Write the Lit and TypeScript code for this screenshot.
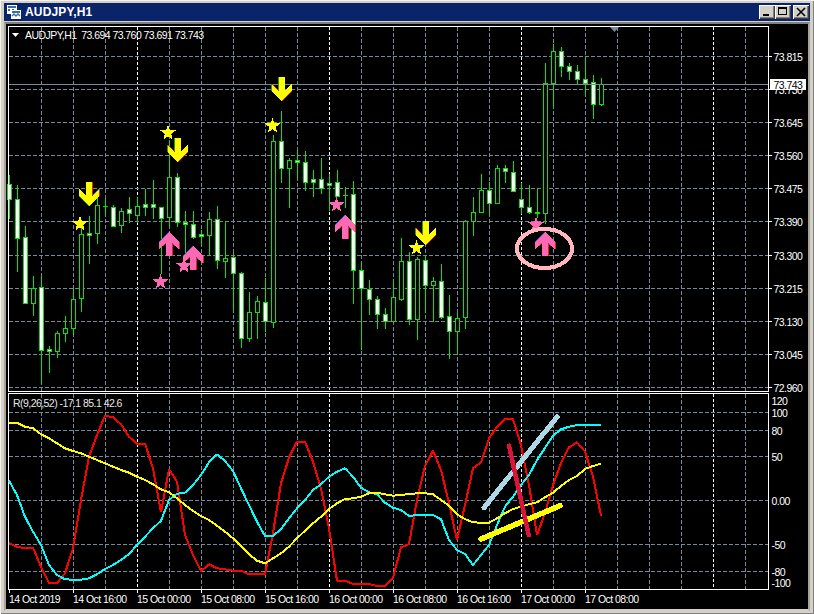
import { LitElement, html, css, svg } from "lit";
import { customElement } from "lit/decorators.js";

// [wick top, body top, body bottom, wick bottom, bearish(white)]
type Bar = [number, number, number, number, number];
const BARS: Bar[] = [
  [175,184,199,218,1],[185,199,238,271,1],[226,237,303,303,1],[276,288,303,315,0],[276,287,350,383,1],
  [346,349,351,372,1],[331,333,351,357,0],[316,328,333,341,0],[289,299,328,334,0],[222,234,298,311,0],
  [216,233,235,263,1],[195,205,233,243,0],[199,206,206,215,0],[205,207,226,226,1],[208,211,225,232,0],
  [197,209,213,222,1],[197,206,215,222,0],[189,204,207,215,1],[180,204,207,218,1],[207,207,218,273,1],
  [140,177,217,227,0],[173,177,222,226,1],[211,222,224,253,1],[211,224,237,238,1],[230,234,236,245,1],
  [212,219,235,255,0],[206,219,260,268,1],[222,258,261,277,0],[253,257,273,310,1],[272,273,338,347,1],
  [292,312,338,341,0],[296,301,312,338,0],[278,302,321,331,1],[135,141,322,327,0],[111,141,168,182,1],
  [158,160,168,207,0],[151,160,162,178,1],[151,162,182,190,1],[170,179,182,196,1],[158,179,188,193,1],
  [174,183,185,210,1],[170,182,196,196,1],[187,195,195,207,0],[181,194,270,303,1],[262,270,288,349,1],
  [280,289,299,314,1],[296,299,314,328,1],[308,314,321,328,1],[280,297,321,321,0],[238,261,299,300,0],
  [252,261,319,324,1],[257,259,319,339,0],[255,260,285,312,1],[277,281,285,321,0],[264,281,317,318,1],
  [295,316,331,358,1],[313,318,331,353,0],[220,221,317,328,0],[197,212,221,235,0],[174,190,212,212,0],
  [182,190,203,215,1],[165,168,203,203,0],[165,168,171,182,1],[161,172,191,191,1],[183,199,207,213,1],
  [185,207,212,213,1],[188,212,213,217,1],[63,83,213,223,0],[44,51,83,107,0],[47,51,66,76,1],
  [63,66,71,79,1],[65,71,79,84,1],[57,79,83,95,1],[75,82,104,118,1],[78,84,104,105,0],
];

const RED = [543.3,546.7,548.3,547.7,566.7,583,583,573.3,548.3,500,456.7,435,415.7,417.3,424.3,436.7,443.7,443.7,468.3,512.3,469,481.7,535,555,571,564.3,568.3,569.3,570.7,570.7,574.3,574.3,574.3,533,483.3,457.7,441.7,441.7,461.7,488.3,528.3,580.7,580.7,584,584,584,586,586,577.7,547.3,544,500,466,450.7,470,503.3,540,505,468.3,462.3,438.3,426.7,419,419,445,485,535,513,485,463,447.3,442.3,451.7,476.7,515.7];
const YELLOW = [422.7,422.7,426.7,428.3,434.3,438.3,443.3,448.3,451,453.3,456.7,460,463.3,466.7,470,472.7,476.7,480,484.3,489.3,492.3,498.3,505,511,516,520,525.7,531.7,538.3,546,554.3,560.7,563.3,558.3,553.3,546.7,538.3,530.7,523.3,516.7,509,503.3,499,498.3,496.7,493.3,492.7,494.3,495.7,495,494,493.3,493.3,494.3,500,505.7,514.3,519,522.3,522.7,522.7,518.3,513.3,509,506.7,504.3,502.3,497.3,492.7,486,480,476,469,466,463.7];
const CYAN = [480.7,495,516.7,531.7,545,565,575,579.3,579.7,579.7,578.3,574.3,569,565,560,554,545,536.7,528.3,520.7,500,493.7,492.7,485,475,462.3,454.3,461,471,488.3,505,521.7,536,536,529,518.3,508.3,500,490,484.3,476.7,471.7,468.3,476.7,487.7,492.3,494.3,502.7,507.7,510,516,515,515,515,519.3,540,550,554,565,555,545,525,506.7,496.7,485,475,460,448,435.7,429.3,426.7,425,425,425,425];

const X = (k: number) => 9 + 8 * k;
const pts = (ys: number[]) => ys.map((y, k) => `${X(k)},${y}`).join(" ");

const V_GRID = Array.from({ length: 23 }, (_, i) => 41 + 32 * i);
const DAY_LINES = new Set([137, 329, 521, 713]);
const MAIN_H = [56, 89, 122, 155, 188, 221, 255, 288, 321, 354, 387];
const PRICES: [string, number][] = [["73.815",56],["73.730",89],["73.645",122],["73.560",155],["73.475",188],["73.390",221],["73.300",255],["73.215",288],["73.130",321],["73.045",354],["72.960",387]];
const SUB_H = [412, 430, 456, 500, 544, 571];
const LEVELS: [string, number][] = [["120",400],["100",412],["80",430],["50",456],["0.00",500],["-50",544],["-80",571],["-100",582]];
const TIMES: [string, number][] = [["14 Oct 2019",9],["14 Oct 16:00",73],["15 Oct 00:00",137],["15 Oct 08:00",201],["15 Oct 16:00",265],["16 Oct 00:00",329],["16 Oct 08:00",393],["16 Oct 16:00",457],["17 Oct 00:00",521],["17 Oct 08:00",585]];

const star = (cx: number, cy: number, cls: string) => {
  const p: string[] = [];
  for (let i = 0; i < 10; i++) {
    const r = i % 2 ? 3.3 : 8;
    const a = -Math.PI / 2 + (i * Math.PI) / 5;
    p.push(`${(cx + r * Math.cos(a)).toFixed(1)},${(cy + r * Math.sin(a)).toFixed(1)}`);
  }
  return svg`<polygon class=${cls} points=${p.join(" ")}></polygon>`;
};

const DOWN = "-3,0 3,0 3,14 10,7 10,14 0,24 -10,14 -10,7 -3,14";
const UP = "0,0 10,10 10,17 3,11 3,24 -3,24 -3,11 -10,17 -10,10";
const arrow = (cx: number, y: number, shape: string, cls: string, left: string, right: string) => svg`
  <g transform="translate(${cx} ${y})">
    <polygon class=${left} points=${shape} transform="translate(-0.5 0)"></polygon>
    <polygon class=${right} points=${shape} transform="translate(0.5 0)"></polygon>
    <polygon class=${cls} points=${shape}></polygon>
  </g>`;

@customElement("app-root")
export class AppRoot extends LitElement {
  static styles = css`
    :host { display: block; width: 814px; height: 614px; }
    .window {
      box-sizing: border-box; width: 814px; height: 614px;
      display: flex; flex-direction: column; padding: 3px 4px 3px 4px;
      background: #d4d0c8; box-shadow: inset 1px 1px 0 #f4f2ee, inset -1px -1px 0 #808080;
    }
    .titlebar {
      flex: 0 0 18px; display: flex; align-items: center; gap: 4px; padding-left: 3px; margin: 0 0 1px 0;
      background: #0a246a; color: #fff;
      font: bold 12px "Liberation Sans", Arial, sans-serif; letter-spacing: 0.15px;
    }
    .title { flex: 1; }
    .app-icon { width: 14px; height: 14px; display: block; }
    .buttons { display: flex; margin-right: 1px; }
    .btn {
      width: 16px; height: 14px; box-sizing: border-box; background: #d4d0c8; display: block;
      box-shadow: inset 1px 1px 0 #fff, inset -1px -1px 0 #404040, inset -2px -2px 0 #808080;
    }
    .btn.close { margin-left: 2px; }
    .client {
      flex: 1; min-height: 0; border: 2px solid; border-color: #808080 #a8a49c #d4d0c8 #a8a49c;
      background: #000; overflow: hidden;
    }
    .chart { display: block; width: 802px; height: 585px; }
    text { font-family: "Liberation Sans", Arial, sans-serif; font-size: 10.5px; letter-spacing: -0.55px; fill: #fff; dominant-baseline: central; white-space: pre; }
    .caption { fill: #e8e8e8; }
    .on-white { fill: #000; }
    .frame { stroke: #fff; fill: none; shape-rendering: crispEdges; }
    .tick { stroke: #fff; shape-rendering: crispEdges; }
    .grid { stroke: #778899; stroke-dasharray: 4 2; shape-rendering: crispEdges; }
    .day { stroke: #fff; stroke-dasharray: 3 2; shape-rendering: crispEdges; }
    .level { stroke: #778899; shape-rendering: crispEdges; }
    .wick { stroke: #00e800; shape-rendering: crispEdges; }
    .outline { fill: #00e800; shape-rendering: crispEdges; }
    .bear { fill: #fff; shape-rendering: crispEdges; }
    .bull { fill: #000; shape-rendering: crispEdges; }
    .red, .yellow, .cyan { fill: none; stroke-width: 2; stroke-linejoin: bevel; shape-rendering: crispEdges; }
    .red { stroke: #ff0000; }
    .yellow { stroke: #ffff00; }
    .cyan { stroke: #00ffff; }
    .s-yellow { fill: #ffff00; shape-rendering: crispEdges; }
    .s-pink { fill: #ff69b4; shape-rendering: crispEdges; }
    .f-green { fill: #20a020; shape-rendering: crispEdges; }
    .f-red { fill: #e02020; shape-rendering: crispEdges; }
    .f-blue { fill: #4848c8; shape-rendering: crispEdges; }
    .marker { fill: #778899; }
    .menu { fill: #fff; }
    .label-bg { fill: #fff; shape-rendering: crispEdges; }
    .ring { fill: none; stroke: #ffb6c1; stroke-width: 4; shape-rendering: crispEdges; }
    .draw { fill: none; stroke-linecap: round; shape-rendering: crispEdges; }
    .d-blue { stroke: #add8e6; stroke-width: 5; }
    .d-yellow { stroke: #ffff00; stroke-width: 5.5; }
    .d-red { stroke: #dc143c; stroke-width: 4.5; }
  `;

  private candle(b: Bar, k: number) {
    const x = X(k);
    const [hi, top, bot, lo, bear] = b;
    const h = Math.max(bot - top, 0) + 1;
    return svg`
      <line class="wick" x1=${x + 0.5} x2=${x + 0.5} y1=${hi} y2=${lo + 1}></line>
      <rect class="outline" x=${x - 2} y=${top} width="5" height=${h}></rect>
      ${h > 2 ? svg`<rect class=${bear ? "bear" : "bull"} x=${x - 1} y=${top + 1} width="3" height=${h - 2}></rect>` : null}`;
  }

  render() {
    return html`
      <div class="window">
        <div class="titlebar">
          <svg class="app-icon" viewBox="0 0 14 14">
            <rect x="0" y="0" width="10" height="9" fill="#fff"></rect>
            <rect x="1" y="1" width="8" height="2" fill="#3a6ea5"></rect>
            <rect x="1" y="4" width="2" height="2" fill="#3a6ea5"></rect>
            <rect x="5" y="4" width="2" height="2" fill="#3a6ea5"></rect>
            <rect x="4" y="5" width="10" height="9" fill="#fff"></rect>
            <rect x="5" y="6" width="8" height="2" fill="#3a6ea5"></rect>
            <path d="M5 11l2-2 2 2 2-2 2 2" fill="none" stroke="#3a6ea5" stroke-width="1.4"></path>
          </svg>
          <span class="title">AUDJPY,H1</span>
          <div class="buttons">
            <svg class="btn" viewBox="0 0 16 14"><rect x="4" y="9" width="6" height="2" fill="#000"></rect></svg>
            <svg class="btn" viewBox="0 0 16 14"><path d="M3 2h9v8H3z M4 4v5h7V4z" fill="#000" fill-rule="evenodd"></path></svg>
            <svg class="btn close" viewBox="0 0 16 14"><path d="M4 3l8 8M12 3l-8 8" stroke="#000" stroke-width="1.6" fill="none"></path></svg>
          </div>
        </div>
        <div class="client">
          <svg class="chart" viewBox="6 24 802 585">
            ${V_GRID.map((x) => svg`
              <line class=${DAY_LINES.has(x) ? "day" : "grid"} x1=${x + 0.5} x2=${x + 0.5} y1="27" y2="391"></line>
              <line class=${DAY_LINES.has(x) ? "day" : "grid"} x1=${x + 0.5} x2=${x + 0.5} y1="394" y2="589"></line>`)}
            ${MAIN_H.map((y) => svg`<line class="grid" x1="9" x2="768" y1=${y + 0.5} y2=${y + 0.5}></line>`)}
            ${SUB_H.map((y) => svg`<line class="grid" x1="9" x2="768" y1=${y + 0.5} y2=${y + 0.5}></line>`)}

            ${BARS.map((b, k) => this.candle(b, k))}
            <line class="level" x1="9" x2="768" y1="84.5" y2="84.5"></line>

            ${star(168, 133, "s-yellow")}${star(80, 224, "s-yellow")}${star(272.5, 126, "s-yellow")}${star(416.5, 248, "s-yellow")}
            ${star(160.5, 282, "s-pink")}${star(184, 266, "s-pink")}${star(336.5, 205, "s-pink")}${star(536, 225, "s-pink")}
            ${[[89, 182], [177.5, 138], [281.5, 77], [425.5, 221]].map(([x, y]) => arrow(x, y, DOWN, "s-yellow", "f-green", "f-red"))}
            ${[[169, 232], [193, 246], [345, 215], [545, 232]].map(([x, y]) => arrow(x, y, UP, "s-pink", "f-blue", "f-red"))}
            <ellipse class="ring" cx="544.5" cy="248.5" rx="27.5" ry="19.5"></ellipse>

            <rect class="frame" x="8.5" y="26.5" width="760" height="365"></rect>
            <rect class="frame" x="8.5" y="393.5" width="760" height="196"></rect>

            <polygon class="menu" points="12,33 19,33 15.5,37"></polygon>
            <text x="25" y="35">AUDJPY,H1  73.694 73.760 73.691 73.743</text>
            <polygon class="marker" points="610,27 619,27 614.5,32"></polygon>

            ${PRICES.map(([t, y]) => svg`
              <line class="tick" x1="769" x2="772" y1=${y + 0.5} y2=${y + 0.5}></line>
              <text x="773.5" y=${y + 1}>${t}</text>`)}
            <rect class="label-bg" x="770" y="79" width="36" height="11"></rect>
            <text class="on-white" x="773.5" y="85">73.743</text>

            <polyline class="red" points=${pts(RED)}></polyline>
            <polyline class="cyan" points=${pts(CYAN)}></polyline>
            <polyline class="yellow" points=${pts(YELLOW)}></polyline>
            <line class="draw d-blue" x1="484" y1="507.7" x2="557" y2="417"></line>
            <line class="draw d-yellow" x1="481" y1="539" x2="560" y2="505.7"></line>
            <line class="draw d-red" x1="509" y1="445.7" x2="528.7" y2="535"></line>

            <text class="caption" x="13" y="402.5">R(9,26,52) -17.1 85.1 42.6</text>
            ${LEVELS.map(([t, y]) => svg`<text x="771.5" y=${y + 1}>${t}</text>`)}
            ${TIMES.map(([t, x]) => svg`
              <line class="tick" x1=${x + 0.5} x2=${x + 0.5} y1="590" y2="593"></line>
              <text x=${x} y="599">${t}</text>`)}
          </svg>
        </div>
      </div>`;
  }
}
